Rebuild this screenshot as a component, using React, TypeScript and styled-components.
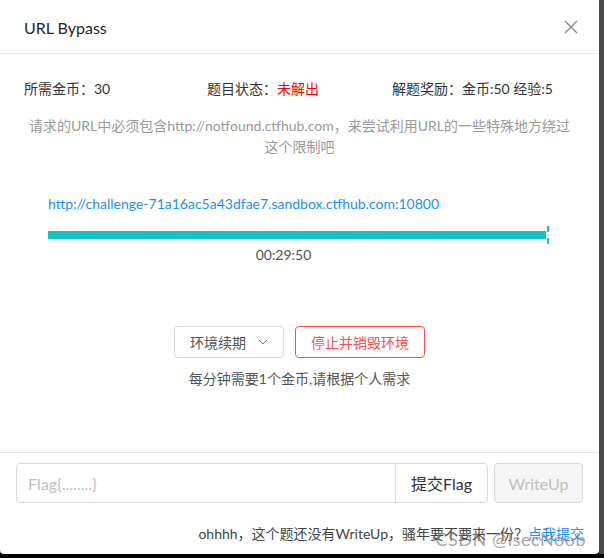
import React from "react";
import styled, { createGlobalStyle } from "styled-components";

const Global = createGlobalStyle`
  html, body { margin: 0; padding: 0; background: #000; }
  body { font-family: Lato, "Noto Sans CJK SC", sans-serif; }
  * { box-sizing: border-box; }
`;

const Screen = styled.div`
  width: 604px;
  height: 558px;
  background: #000;
  display: flex;
  flex-direction: column;
`;

const Top = styled.div`
  display: flex;
  height: 554px;
`;

const Strip = styled.div`
  width: 5px;
  background: #4a4a4a;
`;

const Panel = styled.div`
  width: 599px;
  height: 554px;
  background: #fff;
  border-radius: 0 0 4px 4px;
  display: flex;
  flex-direction: column;
  font-family: Lato, "Noto Sans CJK SC", sans-serif;
  font-size: 14px;
  color: #333;
  position: relative;
  overflow: hidden;
`;

const Header = styled.div`
  height: 54px;
  border-bottom: 1px solid #e8e8e8;
  display: flex;
  align-items: center;
  justify-content: space-between;
  padding: 0 20px 0 24px;
`;

const Title = styled.div`
  font-size: 16px;
  color: #262626;
  margin-top: 1px;
`;

const Close = styled.div`
  width: 16px;
  height: 16px;
  display: flex;
  align-items: center;
  justify-content: center;
  margin-top: 1px;
`;

const Body = styled.div`
  flex: 1;
  padding: 24px 24px 0;
  display: flex;
  flex-direction: column;
`;

const InfoRow = styled.div`
  display: grid;
  grid-template-columns: 183px 185px 1fr;
  height: 22px;
  line-height: 22px;
  color: #333;
`;

const Red = styled.span`
  color: #f00;
`;

const Desc = styled.div`
  margin-top: 15px;
  text-align: center;
  color: #999;
  line-height: 21px;
`;

const Env = styled.div`
  padding: 0 26px 0 24px;
  margin-top: 37px;
  display: flex;
  flex-direction: column;
`;

const Link = styled.a`
  color: #1890ff;
  text-decoration: none;
  line-height: 20px;
`;

const Bar = styled.div`
  margin-top: 17px;
  height: 8px;
  background: #f0f0f0;
  position: relative;
`;

const Fill = styled.div`
  height: 8px;
  background: #13c2c2;
`;

const Marker = styled.div`
  position: absolute;
  right: 0;
  top: -5px;
  width: 2px;
  height: 18px;
  background: linear-gradient(#13c2c2 0 6px, transparent 6px 12px, #13c2c2 12px);
`;

const Time = styled.div`
  text-align: center;
  color: #555;
  margin-top: 6px;
  padding-right: 30px;
  line-height: 20px;
`;

const Actions = styled.div`
  margin-top: 61px;
  display: flex;
  justify-content: center;
  gap: 11px;
`;

const Btn = styled.button<{ $danger?: boolean }>`
  height: 32px;
  padding: 0 15px;
  border-radius: 4px;
  border: 1px solid ${(p) => (p.$danger ? "#ff4d4f" : "#d9d9d9")};
  background: #fff;
  color: ${(p) => (p.$danger ? "#ff4d4f" : "#555")};
  font-family: inherit;
  font-size: 14px;
  display: flex;
  align-items: center;
  gap: 12px;
`;

const Note = styled.div`
  text-align: center;
  color: #555;
  margin-top: 11px;
  line-height: 20px;
`;

const Footer = styled.div`
  border-top: 1px solid #e8e8e8;
  padding: 10px 16px 0;
  height: 102px;
  display: flex;
  flex-direction: column;
`;

const FormRow = styled.div`
  display: flex;
  gap: 6px;
`;

const InputGroup = styled.div`
  display: flex;
  width: 472px;
  height: 40px;
  border: 1px solid #d9d9d9;
  border-radius: 4px;
`;

const Input = styled.div`
  flex: 1;
  padding: 0 11px;
  color: #bfbfbf;
  font-size: 16px;
  display: flex;
  align-items: center;
`;

const Addon = styled.div`
  width: 92px;
  border-left: 1px solid #d9d9d9;
  display: flex;
  align-items: center;
  justify-content: center;
  font-size: 16px;
  color: #333;
`;

const Disabled = styled.div`
  width: 89px;
  height: 40px;
  border: 1px solid #d9d9d9;
  border-radius: 4px;
  background: #f5f5f5;
  color: #bfbfbf;
  font-size: 16px;
  display: flex;
  align-items: center;
  justify-content: center;
`;

const Tip = styled.div`
  margin-top: 21px;
  text-align: right;
  color: #444;
  line-height: 20px;
  margin-right: -1px;
`;

const Blue = styled.span`
  color: #1890ff;
`;

const Watermark = styled.div`
  position: absolute;
  right: 13px;
  bottom: 3px;
  font-size: 18px;
  line-height: 24px;
  color: rgba(125, 125, 125, 0.7);
  font-family: Lato, "Noto Sans CJK SC", sans-serif;
  letter-spacing: 0.5px;
`;

export default function App() {
  return (
    <Screen>
      <Global />
      <Top>
        <Panel>
          <Header>
            <Title>URL Bypass</Title>
            <Close>
              <svg width="14" height="14" viewBox="0 0 14 14">
                <path d="M1 1 L13 13 M13 1 L1 13" stroke="#888" strokeWidth="1.4" fill="none" />
              </svg>
            </Close>
          </Header>
          <Body>
            <InfoRow>
              <div>所需金币：30</div>
              <div>
                题目状态：<Red>未解出</Red>
              </div>
              <div>解题奖励：金币:50 经验:5</div>
            </InfoRow>
            <Desc>
              请求的URL中必须包含http://notfound.ctfhub.com，来尝试利用URL的一些特殊地方绕过这个限制吧
            </Desc>
            <Env>
              <Link href="#">http://challenge-71a16ac5a43dfae7.sandbox.ctfhub.com:10800</Link>
              <Bar>
                <Fill style={{ width: "99.4%" }} />
                <Marker />
              </Bar>
              <Time>00:29:50</Time>
            </Env>
            <Actions>
              <Btn>
                环境续期
                <svg width="10" height="6" viewBox="0 0 10 6">
                  <path d="M1 1 L5 5 L9 1" stroke="#777" strokeWidth="1" fill="none" />
                </svg>
              </Btn>
              <Btn $danger>停止并销毁环境</Btn>
            </Actions>
            <Note>每分钟需要1个金币,请根据个人需求</Note>
          </Body>
          <Footer>
            <FormRow>
              <InputGroup>
                <Input>Flag{"{........}"}</Input>
                <Addon>提交Flag</Addon>
              </InputGroup>
              <Disabled>WriteUp</Disabled>
            </FormRow>
            <Tip>
              ohhhh，这个题还没有WriteUp，骚年要不要来一份？<Blue>点我提交</Blue>
            </Tip>
          </Footer>
          <Watermark>CSDN @IsecNoob</Watermark>
        </Panel>
        <Strip />
      </Top>
    </Screen>
  );
}
